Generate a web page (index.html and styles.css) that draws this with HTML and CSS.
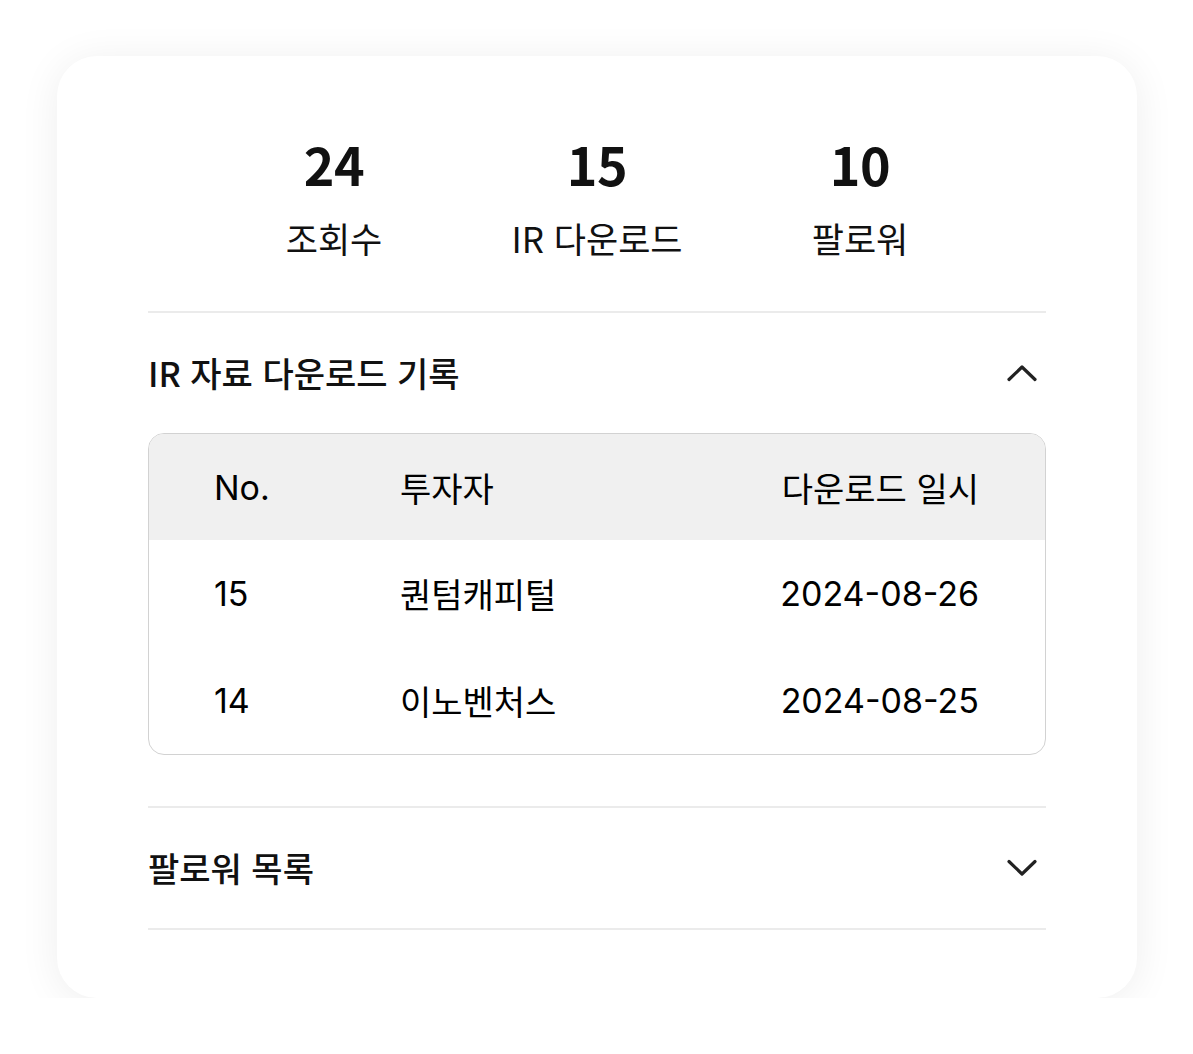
FILE: index.html
```html
<!DOCTYPE html>
<html lang="ko">
<head>
    <meta charset="UTF-8">
    <meta name="viewport" content="width=device-width, initial-scale=1.0">
    <title>IR 통계</title>
    <link rel="stylesheet" href="styles.css">
</head>
<body>

    <div class="card">
        <!-- 상단 통계 -->
        <div class="stats">
            <div class="stat">
                <div class="stat-num">24</div>
                <div class="stat-label">조회수</div>
            </div>
            <div class="stat">
                <div class="stat-num">15</div>
                <div class="stat-label">IR 다운로드</div>
            </div>
            <div class="stat">
                <div class="stat-num">10</div>
                <div class="stat-label">팔로워</div>
            </div>
        </div>

        <div class="section open">
            <div class="section-head">
                <span>IR 자료 다운로드 기록</span>
                <svg class="chevron" width="30" height="18" viewBox="0 0 30 18">
                    <path d="M2 15.5 L15 3 L28 15.5" fill="none" stroke="#222" stroke-width="3.2" stroke-linecap="round" stroke-linejoin="round"/>
                </svg>
            </div>
            <div class="table">
                <div class="row head">
                    <div>No.</div>
                    <div>투자자</div>
                    <div class="right">다운로드 일시</div>
                </div>
                <div class="row">
                    <div>15</div>
                    <div>퀀텀캐피털</div>
                    <div class="right">2024-08-26</div>
                </div>
                <div class="row">
                    <div>14</div>
                    <div>이노벤처스</div>
                    <div class="right">2024-08-25</div>
                </div>
            </div>
        </div>

        <div class="section">
            <div class="section-head">
                <span>팔로워 목록</span>
                <svg class="chevron" width="30" height="18" viewBox="0 0 30 18">
                    <path d="M2 2.5 L15 15 L28 2.5" fill="none" stroke="#222" stroke-width="3.2" stroke-linecap="round" stroke-linejoin="round"/>
                </svg>
            </div>
        </div>
    </div>

</body>
</html>
```

FILE: styles.css
```css
* {
    box-sizing: border-box;
    margin: 0;
    padding: 0;
}

body {
    background-color: #ffffff;
    font-family: "Noto Sans CJK KR", "Noto Sans", sans-serif;
    color: #111;
    padding: 56px 56px 0 57px;
}

.card {
    width: 1080px;
    height: 942px;
    background: #fff;
    border-radius: 40px;
    box-shadow: 0 4px 40px rgba(0, 0, 0, 0.07);
    padding: 0 91px 69px 91px;
}

.stats {
    display: grid;
    grid-template-columns: repeat(3, 263px);
    justify-content: center;
    padding: 72px 0 51px;
}

.stat {
    display: flex;
    flex-direction: column;
    align-items: center;
    gap: 16px;
}

.stat-num {
    font-size: 52px;
    font-weight: 700;
    line-height: 72px;
    letter-spacing: -0.5px;
}

.stat-label {
    font-size: 35px;
    font-weight: 400;
    line-height: 44px;
}

.section {
    border-top: 2px solid #ebebeb;
}

.section:last-child {
    border-bottom: 2px solid #ebebeb;
}

.section-head {
    display: flex;
    justify-content: space-between;
    align-items: center;
    padding: 38px 9px 38px 0;
    font-size: 34px;
    font-weight: 500;
    line-height: 44px;
}

.section.open {
    padding-bottom: 51px;
}

.table {
    border: 1px solid #d2d2d2;
    border-radius: 16px;
    overflow: hidden;
    font-family: "Inter", "Noto Sans CJK KR", sans-serif;
    font-size: 34px;
    color: #000;
}

.row {
    display: grid;
    grid-template-columns: 186px 1fr auto;
    align-items: center;
    height: 107px;
    padding: 0 66px 0 65px;
}

.row.head {
    height: 106px;
    background: #f0f0f0;
}

.right {
    text-align: right;
}
```
